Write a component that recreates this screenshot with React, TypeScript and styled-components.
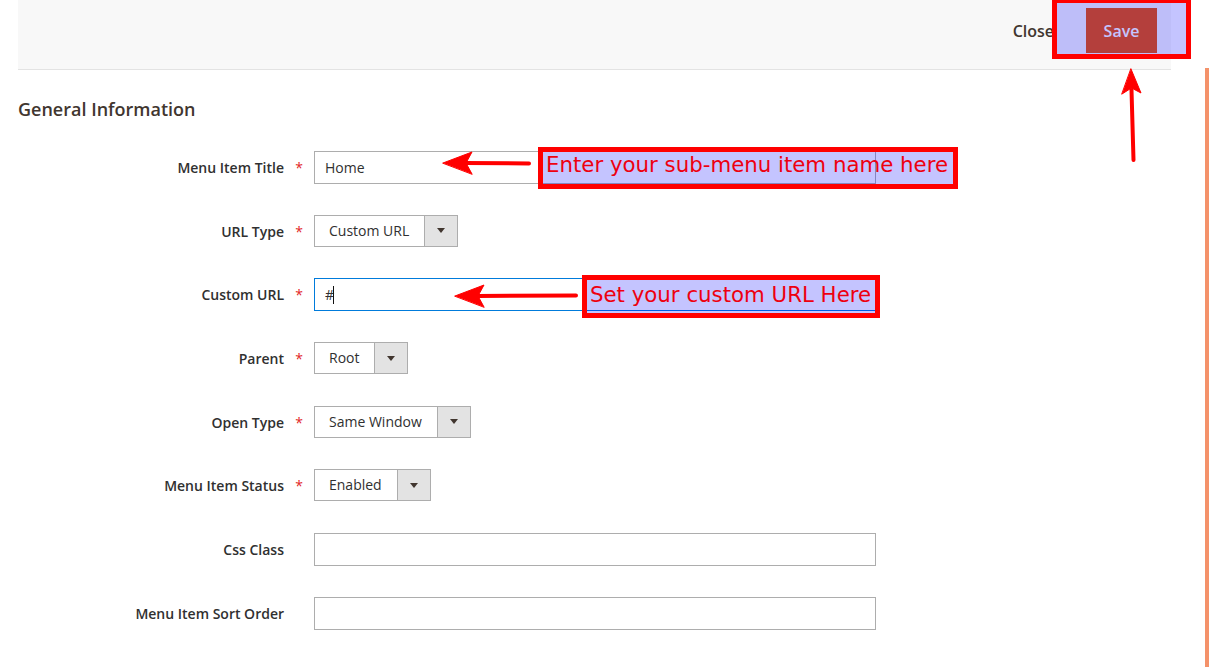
import React from "react";
import styled, { createGlobalStyle } from "styled-components";

const GlobalStyle = createGlobalStyle`
  html, body { margin: 0; padding: 0; background: #fff; }
  body { font-family: "Open Sans", "Liberation Sans", sans-serif; color: #303030; }
  * { box-sizing: border-box; }
`;

const Page = styled.div`
  position: relative;
  width: 1209px;
  height: 667px;
  overflow: hidden;
  display: flex;
`;

const Main = styled.div`
  width: 1205px;
  display: flex;
  flex-direction: column;
`;

const RightStrip = styled.div`
  width: 4px;
  margin-top: 68px;
  background: #f4926a;
`;

const Header = styled.header`
  margin-left: 18px;
  width: 1153px;
  height: 70px;
  background: #f8f8f8;
  border-bottom: 1px solid #e3e3e3;
  display: flex;
  justify-content: flex-end;
  align-items: flex-start;
  padding: 8px 14px 0 0;
`;

const CloseButton = styled.button`
  height: 45px;
  border: 0;
  background: transparent;
  font-family: "Open Sans", "Liberation Sans", sans-serif;
  font-weight: 600;
  font-size: 16px;
  color: #41362f;
  padding: 0;
  margin-right: 32px;
  cursor: pointer;
`;

const SaveButton = styled.button`
  height: 45px;
  width: 71px;
  border: 0;
  background: #eb5202;
  color: #fff;
  font-family: "Open Sans", "Liberation Sans", sans-serif;
  font-weight: 600;
  font-size: 16px;
  padding: 0;
  cursor: pointer;
`;

const Section = styled.section`
  padding-left: 18px;
`;

const Heading = styled.h2`
  margin: 27px 0 0 0;
  font-size: 18px;
  line-height: 24px;
  font-weight: 600;
  color: #41362f;
`;

const Form = styled.div`
  margin-top: 30px;
  display: grid;
  grid-template-columns: 284px 30px 1fr;
  row-gap: 30.7px;
  align-items: center;
`;

const Label = styled.label`
  text-align: right;
  font-size: 14px;
  font-weight: 600;
  color: #303030;
  line-height: 33px;
`;

const Required = styled.span<{ $show: boolean }>`
  text-align: center;
  color: #e22626;
  font-size: 14px;
  line-height: 33px;
  visibility: ${(p) => (p.$show ? "visible" : "hidden")};
`;

const Control = styled.div`
  position: relative;
  height: 33px;
  display: flex;
`;

const TextInput = styled.input<{ $focused?: boolean }>`
  width: 562px;
  height: 33px;
  border: 1px solid ${(p) => (p.$focused ? "#007bdb" : "#adadad")};
  background: #fff;
  padding: 0 10px;
  font-family: "Open Sans", "Liberation Sans", sans-serif;
  font-size: 14px;
  color: #303030;
  outline: none;
`;

const Caret = styled.span`
  position: absolute;
  left: 19px;
  top: 8px;
  width: 1px;
  height: 18px;
  background: #111;
`;

const Select = styled.div`
  display: inline-flex;
  height: 32px;
  border: 1px solid #adadad;
  background: #fff;
`;

const SelectValue = styled.span`
  padding: 0 15px 0 14px;
  font-size: 14px;
  line-height: 30px;
  color: #303030;
`;

const SelectButton = styled.span`
  width: 33px;
  background: #e3e3e3;
  border-left: 1px solid #adadad;
  display: flex;
  align-items: center;
  justify-content: center;
  &::after {
    content: "";
    border-top: 5px solid #41362f;
    border-left: 4px solid transparent;
    border-right: 4px solid transparent;
  }
`;

const Highlight = styled.div<{ $lift?: number }>`
  position: absolute;
  border: 5px solid #ff0000;
  background: rgba(0, 0, 255, 0.23);
  display: flex;
  align-items: center;
  padding-left: 3px;
  padding-bottom: ${(p) => p.$lift ?? 0}px;
  font-family: "DejaVu Sans", "Liberation Sans", sans-serif;
  font-size: 21.3px;
  line-height: 24px;
  color: #ee0010;
  white-space: nowrap;
  pointer-events: none;
`;

const ArrowLayer = styled.svg`
  position: absolute;
  left: 0;
  top: 0;
  pointer-events: none;
`;

type Row =
  | { label: string; req: boolean; kind: "text"; value?: string; focused?: boolean }
  | { label: string; req: boolean; kind: "select"; value: string };

const rows: Row[] = [
  { label: "Menu Item Title", req: true, kind: "text", value: "Home" },
  { label: "URL Type", req: true, kind: "select", value: "Custom URL" },
  { label: "Custom URL", req: true, kind: "text", value: "#", focused: true },
  { label: "Parent", req: true, kind: "select", value: "Root" },
  { label: "Open Type", req: true, kind: "select", value: "Same Window" },
  { label: "Menu Item Status", req: true, kind: "select", value: "Enabled" },
  { label: "Css Class", req: false, kind: "text" },
  { label: "Menu Item Sort Order", req: false, kind: "text" },
];

export default function App() {
  return (
    <Page>
      <GlobalStyle />
      <Main>
        <Header>
          <CloseButton>Close</CloseButton>
          <SaveButton>Save</SaveButton>
        </Header>
        <Section>
          <Heading>General Information</Heading>
        </Section>
        <Form>
          {rows.map((r) => (
            <React.Fragment key={r.label}>
              <Label>{r.label}</Label>
              <Required $show={r.req}>*</Required>
              <Control>
                {r.kind === "text" ? (
                  <>
                    <TextInput readOnly value={r.value ?? ""} $focused={r.focused} />
                    {r.focused && <Caret />}
                  </>
                ) : (
                  <Select>
                    <SelectValue>{r.value}</SelectValue>
                    <SelectButton />
                  </Select>
                )}
              </Control>
            </React.Fragment>
          ))}
        </Form>
      </Main>
      <RightStrip />

      <Highlight style={{ left: 1052, top: -2, width: 139, height: 61 }} />
      <Highlight $lift={7} style={{ left: 538, top: 147, width: 420, height: 42 }}>
        Enter your sub-menu item name here
      </Highlight>
      <Highlight $lift={4} style={{ left: 582, top: 275, width: 298, height: 43 }}>
        Set your custom URL Here
      </Highlight>

      <ArrowLayer width="1209" height="667" viewBox="0 0 1209 667">
        <g fill="#ff0000" stroke="#ff0000" strokeLinecap="round">
          <line x1="529" y1="163.5" x2="465" y2="163" strokeWidth="4" />
          <path d="M443 163 L472 152 L466 163 L472 174 Z" strokeWidth="1" />
          <line x1="576" y1="295.5" x2="477" y2="296" strokeWidth="4" />
          <path d="M455 296 L484 285 L478 296 L484 307 Z" strokeWidth="1" />
          <line x1="1133.5" y1="160" x2="1131.5" y2="90" strokeWidth="4" />
          <path d="M1131 69 L1141 93 L1131.5 88 L1122 94 Z" strokeWidth="1" />
        </g>
      </ArrowLayer>
    </Page>
  );
}
